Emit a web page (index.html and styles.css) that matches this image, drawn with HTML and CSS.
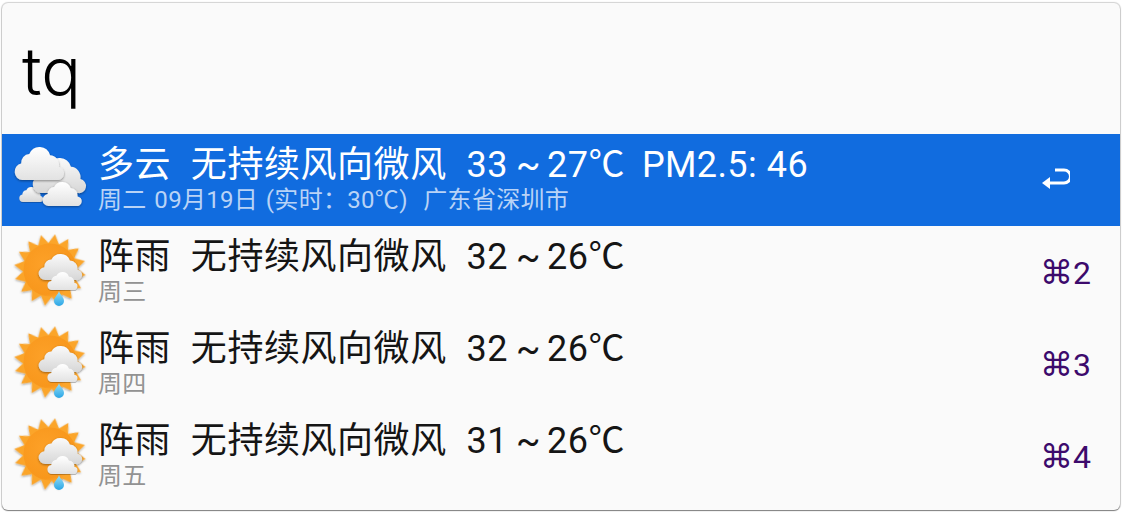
FILE: index.html
```html
<!DOCTYPE html>
<html lang="zh">
<head>
<meta charset="utf-8">
<title>tq</title>
<link rel="stylesheet" href="styles.css">
</head>
<body>
<svg class="defs" width="0" height="0" aria-hidden="true">
  <defs>
    <linearGradient id="cloudA" x1="0" y1="0" x2="0" y2="1"><stop offset="0" stop-color="#ffffff"/><stop offset="1" stop-color="#e2e2e2"/></linearGradient>
    <linearGradient id="cloudB" x1="0" y1="0" x2="0" y2="1"><stop offset="0" stop-color="#fafafa"/><stop offset="1" stop-color="#d6d6d6"/></linearGradient>
    <radialGradient id="sunG" cx="0.4" cy="0.4" r="0.7"><stop offset="0" stop-color="#fda128"/><stop offset="0.8" stop-color="#f8971c"/><stop offset="1" stop-color="#fcae3c"/></radialGradient>
    <linearGradient id="dropG" x1="0" y1="0" x2="0" y2="1"><stop offset="0" stop-color="#9ae0f8"/><stop offset="1" stop-color="#2aa6e6"/></linearGradient>
    <filter id="soft" x="-20%" y="-20%" width="140%" height="150%"><feDropShadow dx="0" dy="1" stdDeviation="1" flood-color="#000" flood-opacity=".4"/></filter>
    <path id="cloudShape" d="M8 30a7.500 7.500 0 0 1-1-14.900A8 8 0 0 1 15 6.400A11 11 0 0 1 35.400 7.500A9 9 0 0 1 44 18A6 6 0 0 1 42 30Z"/>
    <symbol id="cloudy" viewBox="0 -6 74 66">
      <use href="#cloudShape" fill="url(#cloudB)" filter="url(#soft)" transform="translate(6 34) scale(.49 .5)"/>
      <use href="#cloudShape" fill="url(#cloudB)" filter="url(#soft)" transform="translate(19 5) scale(1.1 1.17)"/>
      <use href="#cloudShape" fill="url(#cloudA)" filter="url(#soft)" transform="translate(1 -6) scale(1.02 1.1)"/>
      <use href="#cloudShape" fill="url(#cloudA)" filter="url(#soft)" transform="translate(29 29) scale(.81 .8)"/>
    </symbol>
    <symbol id="shower" viewBox="0 0 76 76">
      <polygon filter="url(#soft)" fill="#fba52b" transform="rotate(8 37 36)" points="73,36 63.500,41.300 70.300,49.800 59.400,51 62.500,61.500 52,58.400 50.800,69.300 42.300,62.500 37,72 31.700,62.500 23.200,69.300 22,58.400 11.500,61.500 14.600,51 3.700,49.800 10.500,41.300 1,36 10.500,30.700 3.700,22.200 14.600,21 11.500,10.500 22,13.600 23.200,2.700 31.700,9.500 37,0 42.300,9.500 50.800,2.700 52,13.600 62.500,10.500 59.400,21 70.300,22.200 63.500,30.700"/>
      <circle cx="37" cy="36" r="26.500" fill="url(#sunG)"/>
      <path d="M46 57c-1 4-5 6-5 10a5 5 0 0 0 10 0c0-4-4-6-5-10Z" fill="url(#dropG)"/>
      <use href="#cloudShape" fill="url(#cloudB)" filter="url(#soft)" transform="translate(25 20) scale(.9 .87)"/>
      <use href="#cloudShape" fill="url(#cloudA)" filter="url(#soft)" transform="translate(34 38) scale(.62 .6)"/>
    </symbol>
  </defs>
</svg>
<main class="window">
  <div class="query">tq</div>
  <ul class="results">
    <li class="row row-selected">
      <svg class="icon icon-cloudy"><use href="#cloudy"/></svg>
      <div class="text">
        <div class="title">多云&nbsp; 无持续风向微风&nbsp; 33<span class="tilde"> ~ </span>27℃&nbsp; <span class="pm">PM2.5: 46</span></div>
        <div class="sub">周二 09月19日 (实时：30℃)&nbsp; 广东省深圳市</div>
      </div>
      <svg class="enter" viewBox="0 0 28 22"><path d="M13 2h9a6.500 6.500 0 0 1 0 13H5" fill="none" stroke="currentColor" stroke-width="3"/><path d="M0 15 8 9v12Z" fill="currentColor"/></svg>
    </li>
    <li class="row">
      <svg class="icon"><use href="#shower"/></svg>
      <div class="text">
        <div class="title">阵雨&nbsp; 无持续风向微风&nbsp; 32<span class="tilde"> ~ </span>26℃</div>
        <div class="sub">周三</div>
      </div>
      <div class="shortcut"><span class="cmd">⌘</span>2</div>
    </li>
    <li class="row">
      <svg class="icon"><use href="#shower"/></svg>
      <div class="text">
        <div class="title">阵雨&nbsp; 无持续风向微风&nbsp; 32<span class="tilde"> ~ </span>26℃</div>
        <div class="sub">周四</div>
      </div>
      <div class="shortcut"><span class="cmd">⌘</span>3</div>
    </li>
    <li class="row">
      <svg class="icon"><use href="#shower"/></svg>
      <div class="text">
        <div class="title">阵雨&nbsp; 无持续风向微风&nbsp; 31<span class="tilde"> ~ </span>26℃</div>
        <div class="sub">周五</div>
      </div>
      <div class="shortcut"><span class="cmd">⌘</span>4</div>
    </li>
  </ul>
</main>
</body>
</html>
```

FILE: styles.css
```css
* { box-sizing: border-box; }
html, body { margin: 0; height: 100%; }
body {
  background: #ffffff;
  padding: 3px 2px 2px;
  font-family: Roboto, "Noto Sans CJK SC", sans-serif;
  overflow: hidden;
}
.defs { position: absolute; }
.window {
  height: 507px;
  background: #fafafa;
  border-radius: 6px;
  box-shadow: 0 1px 1px 0 rgba(0,0,0,.4), 0 0 1px 1px rgba(0,0,0,.18);
  overflow: hidden;
}
.query {
  height: 131px;
  padding: 28px 0 0 20px;
  font-family: Inter, sans-serif;
  font-weight: 300;
  font-size: 66px;
  line-height: 80px;
  color: #000;
}
.results { list-style: none; margin: 0; padding: 0; }
.row {
  height: 92px;
  display: flex;
  align-items: center;
  color: #151515;
}
.row-selected { background: #116cdf; color: #fff; }
.icon { width: 76px; height: 76px; margin-left: 11px; flex: none; }
.icon-cloudy { height: 66px; margin-left: 10px; margin-right: 1px; }
.text { margin-left: 9px; padding-bottom: 1px; flex: 1; min-width: 0; }
.title {
  font-size: 36px;
  line-height: 40px;
  margin-bottom: 1px;
  white-space: nowrap;
  letter-spacing: 0.55px;
  word-spacing: 0.4px;
}
.tilde { letter-spacing: -1.4px; }
.pm { margin-left: -3px; letter-spacing: 0.4px; }
.sub {
  font-size: 24px;
  line-height: 28px;
  color: #929292;
  white-space: nowrap;
  letter-spacing: 0.3px;
  word-spacing: 1.5px;
}
.row-selected .sub { color: #b9d3f6; }
.shortcut {
  flex: none;
  width: 80px;
  font-size: 32px;
  color: #3d0a6c;
  margin-top: 2px;
  white-space: nowrap;
}
.cmd { font-family: "DejaVu Sans", sans-serif; font-size: 33px; line-height: 36px; }
.enter { flex: none; width: 28px; height: 22px; color: #fff; margin-right: 50px; margin-top: -2px; }
```
